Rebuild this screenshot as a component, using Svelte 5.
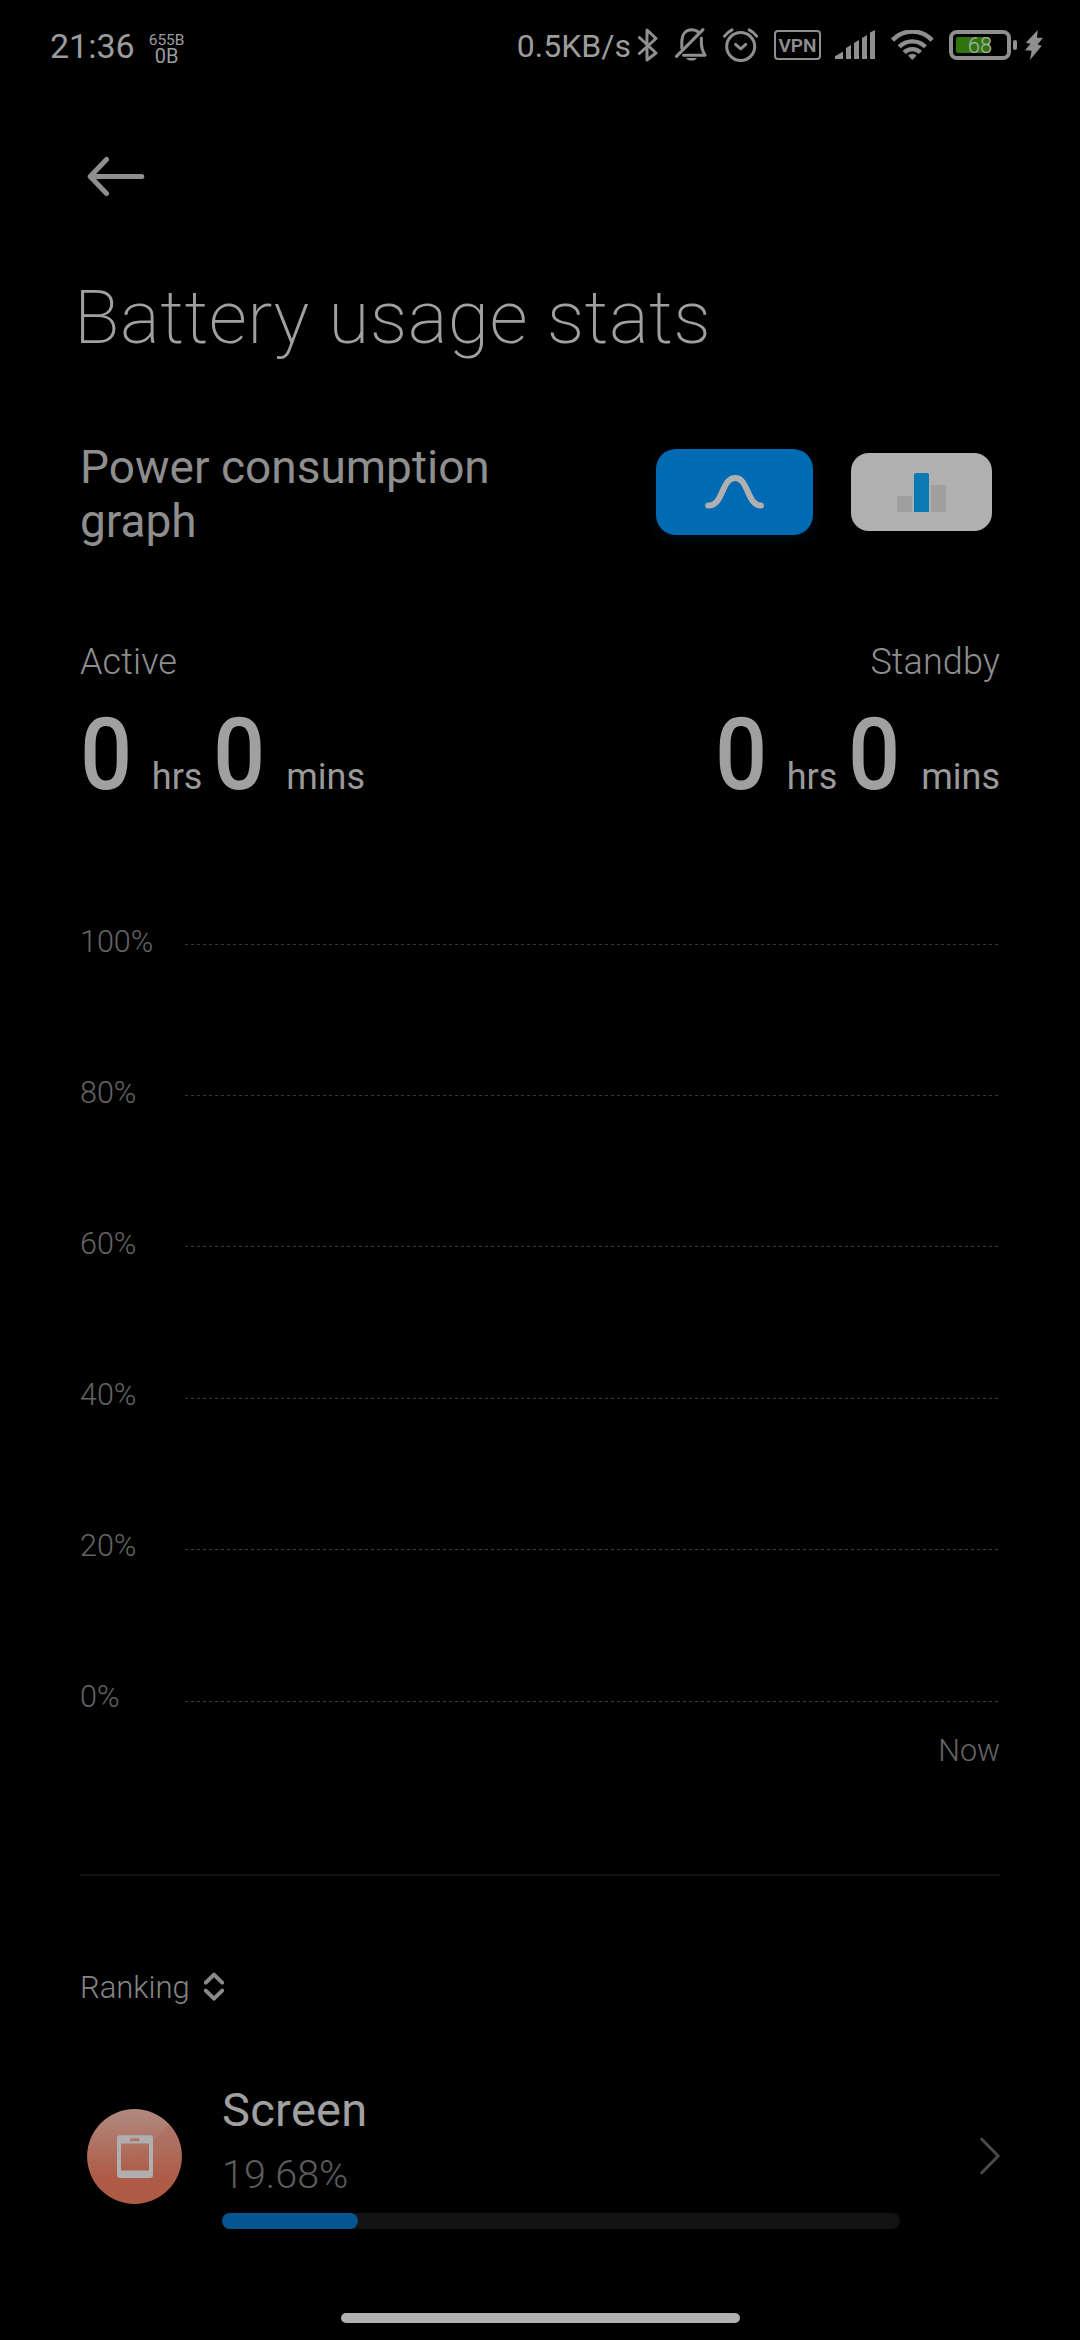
<svelte:options runes={true} />

<script>
	const usage = [
		{ label: 'Active', hours: 0, minutes: 0 },
		{ label: 'Standby', hours: 0, minutes: 0 }
	];

	const gridLevels = [100, 80, 60, 40, 20, 0];

	const ranking = [{ name: 'Screen', percent: 19.68 }];

	const signalBars = [
		'M0 26.3 L8 21.5 V29 H0z',
		'M11 18 L16 15 V29 H11z',
		'M19 13 L24 10 V29 H19z',
		'M27 8 L32 5 V29 H27z',
		'M35 2.4 L40 0 V29 H35z'
	];

	let mode = $state('curve');
</script>

<svelte:head>
	<title>Battery usage stats</title>
</svelte:head>

<div class="screen">
	<div class="status-bar">
		<span class="clock">21:36</span>
		<div class="traffic">
			<span class="traffic-up">655B</span>
			<span class="traffic-down">0B</span>
		</div>

		<div class="status-icons">
			<span class="speed">0.5KB/s</span>
			<svg class="bluetooth" width="20" height="34" viewBox="0 0 20 34">
				<path class="line" d="M1.4 9.5 L18 25 L9 32 V2 L18 10.5 L1.4 25.5" />
			</svg>
			<svg class="muted" width="32" height="34" viewBox="0 0 32 34">
				<path class="line" d="M6.8 20 V14 C6.8 6 11 1.8 16.5 1.8 C20 1.8 22.3 2.8 24 4.8" />
				<path class="line" d="M26.4 10 V16 C26.4 21 28 23.6 30 27.2 H8.5" />
				<path class="line" d="M1.5 28.4 L28 1.6" />
				<path class="solid" d="M11 30 H22 C20.5 33.4 12.5 33.4 11 30z" />
			</svg>
			<svg class="alarm" width="35" height="34" viewBox="0 0 35 34">
				<circle class="line" cx="17.7" cy="18.5" r="14" />
				<path class="line" d="M1.6 8.2 Q4.6 4 9 1.8 M26.2 1.8 Q30.6 4 33.6 8.2" />
				<path class="line" d="M12.6 16.4 L17.7 20.8 L22.8 16.4" />
			</svg>
			<span class="vpn">VPN</span>
			<svg class="signal" width="40" height="30" viewBox="0 0 40 30">
				{#each signalBars as d}
					<path class="solid" {d} />
				{/each}
			</svg>
			<svg class="wifi" width="43" height="30" viewBox="0 0 43 30">
				<path d="M1.5 10.2 A27 27 0 0 1 41.1 10.2" />
				<path d="M8.2 16.8 A18.5 18.5 0 0 1 34.4 16.8" />
				<path d="M13.2 22.6 A11.2 11.2 0 0 1 29.4 22.6" />
				<path class="solid" d="M17 25.6 Q21.3 22 25.6 25.6 L21.3 30z" />
			</svg>
			<div class="battery">
				<div class="battery-fill"></div>
				<span class="battery-level">68</span>
			</div>
			<div class="battery-tip"></div>
			<svg class="bolt" width="18" height="30" viewBox="0 0 18 30">
				<path class="solid" d="M12.8 0 L0.8 12.8 L5.6 13.8 L0 20.2 L6.6 20.8 L5 30 L16.8 15.8 L12.6 14.6 L18 7.8 L12 7.8z" />
			</svg>
		</div>
	</div>

	<header class="header">
		<button class="back" aria-label="Back">
			<svg width="58" height="40" viewBox="0 0 58 40">
				<path d="M54.8 20.4 H3.2 M19.5 3.4 L3.2 20.4 L19.5 37.4" />
			</svg>
		</button>
		<h1>Battery usage stats</h1>
	</header>

	<main>
		<section class="mode-row">
			<h2>Power consumption graph</h2>
			<div class="modes">
				<button class="mode" class:active={mode === 'curve'} aria-label="Curve" onclick={() => (mode = 'curve')}>
					<svg width="60" height="36" viewBox="0 0 60 36">
						<path class="curve" d="M3.2 31.6 C19 31.6 16 4 30.3 4 C43.5 4 42 31.6 56 31.6" />
					</svg>
				</button>
				<button class="mode" class:active={mode === 'bars'} aria-label="Bars" onclick={() => (mode = 'bars')}>
					<svg width="49" height="39" viewBox="0 0 49 39">
						<path class="bar-side" d="M0 39 V24.5 Q0 23 1.5 23 H13.5 Q15 23 15 24.5 V39z" />
						<path class="bar-mid" d="M17 39 V2 Q17 0 19 0 H30 Q32 0 32 2 V39z" />
						<path class="bar-side" d="M34 39 V14 Q34 12 36 12 H47 Q49 12 49 14 V39z" />
					</svg>
				</button>
			</div>
		</section>

		<section class="usage">
			{#each usage as item}
				<div class="usage-item">
					<span class="usage-label">{item.label}</span>
					<div class="usage-time">
						<b>{item.hours}</b><span class="hrs">hrs</span><b>{item.minutes}</b><span class="mins">mins</span>
					</div>
				</div>
			{/each}
		</section>

		<section class="chart">
			{#each gridLevels as level, i}
				<div class="grid-row">
					<span class="grid-label">{level}%</span>
					<!-- the plot is 2px taller than the label column -->
					<div class="grid-line" style="margin-top: {20 + Math.floor(i * 0.4)}px"></div>
				</div>
			{/each}
			<span class="now">Now</span>
		</section>

		<section class="ranking">
			<div class="ranking-title">
				<span>Ranking</span>
				<svg width="20" height="30" viewBox="0 0 20 30">
					<path d="M1.8 10.6 L10 2.6 L18.2 10.6 M1.8 18.6 L10 26.6 L18.2 18.6" />
				</svg>
			</div>

			{#each ranking as app}
				<div class="app">
					<svg class="app-icon" width="95" height="95" viewBox="0 0 95 95">
						<defs>
							<linearGradient id="coral" x1="0" y1="0" x2="0" y2="1">
								<stop offset="0" stop-color="#b08a80" />
								<stop offset="0.35" stop-color="#af7364" />
								<stop offset="0.7" stop-color="#ae5c47" />
								<stop offset="1" stop-color="#ad5b44" />
							</linearGradient>
							<linearGradient id="shade" x1="0" y1="0" x2="0" y2="1">
								<stop offset="0" stop-color="#a85a45" stop-opacity="0.3" />
								<stop offset="1" stop-color="#a85a45" stop-opacity="0" />
							</linearGradient>
							<clipPath id="disc"><circle cx="47.5" cy="47.5" r="47.4" /></clipPath>
						</defs>
						<circle cx="47.5" cy="47.5" r="47.4" fill="url(#coral)" />
						<path d="M84 14 L42 54 H95 V14z" fill="url(#shade)" clip-path="url(#disc)" />
						<path
							fill="#b0aeae"
							fill-rule="evenodd"
							d="M33 26.3 H63 Q66 26.3 66 29.3 V66 Q66 69 63 69 H33 Q30 69 30 66 V29.3 Q30 26.3 33 26.3z M34 34.5 V61.5 H62 V34.5z M44 29.2 Q42.8 29.2 42.8 30.7 Q42.8 32.2 44 32.2 H51.3 Q52.5 32.2 52.5 30.7 Q52.5 29.2 51.3 29.2z"
						/>
					</svg>
					<div class="app-body">
						<span class="app-name">{app.name}</span>
						<span class="app-percent">{app.percent}%</span>
						<div class="track">
							<div class="track-fill" style="width: {Math.round(app.percent)}%"></div>
						</div>
					</div>
					<svg class="chevron" width="20" height="38" viewBox="0 0 20 38">
						<path d="M1.8 2.2 L18.2 19 L1.8 35.8" />
					</svg>
				</div>
			{/each}
		</section>
	</main>

	<div class="home-indicator"></div>
</div>

<style>
	:global(body) {
		margin: 0;
		background: #000;
	}

	.screen {
		box-sizing: border-box;
		width: 1080px;
		height: 2340px;
		display: flex;
		flex-direction: column;
		overflow: hidden;
		background: #000;
		color: #8e8e8e;
		font-family: Roboto, sans-serif;
	}

	.screen svg {
		display: block;
		flex-shrink: 0;
		fill: none;
		stroke-linecap: round;
		stroke-linejoin: round;
	}

	button {
		padding: 0;
		border: none;
		background: none;
	}

	/* status bar */
	.status-bar {
		height: 90px;
		display: flex;
		align-items: center;
		padding: 0 37px 0 50px;
		color: #9c9c9c;
	}

	.clock {
		font-size: 34px;
		line-height: 40px;
		padding-top: 2px;
	}

	.traffic {
		display: flex;
		flex-direction: column;
		align-items: center;
		margin-left: 14px;
		padding-top: 7px;
	}

	.traffic-up {
		font-size: 15.5px;
		line-height: 15px;
	}

	.traffic-down {
		font-size: 20px;
		line-height: 16px;
	}

	.status-icons {
		display: flex;
		align-items: center;
		margin-left: auto;
	}

	.speed {
		font-size: 32px;
		line-height: 38px;
		padding-top: 1px;
		margin-right: 7px;
	}

	.status-icons .line {
		stroke: #8f8f8f;
		stroke-width: 3;
	}

	.status-icons .solid {
		fill: #8f8f8f;
		stroke: none;
	}

	.muted {
		margin-left: 17px;
	}

	.alarm {
		margin-left: 16px;
	}

	.vpn {
		box-sizing: border-box;
		width: 47px;
		height: 30px;
		margin-left: 16px;
		border: 2px solid #8f8f8f;
		border-radius: 4px;
		color: #8f8f8f;
		font-size: 19px;
		font-weight: 600;
		line-height: 27px;
		text-align: center;
	}

	.signal {
		margin-left: 14px;
	}

	.wifi {
		margin-left: 16px;
	}

	.wifi path:not(.solid) {
		stroke: #8f8f8f;
		stroke-width: 4.4;
		stroke-linecap: butt;
	}

	.battery {
		position: relative;
		box-sizing: border-box;
		width: 62px;
		height: 30px;
		margin-left: 15px;
		padding: 3px;
		border: 4px solid #8f8f8f;
		border-radius: 8px;
	}

	.battery-fill {
		width: 34px;
		height: 16px;
		border-radius: 2px;
		background: #2e760c;
	}

	.battery-level {
		position: absolute;
		inset: 0;
		color: #b0b0b0;
		font-size: 22px;
		font-weight: 300;
		line-height: 24px;
		text-align: center;
	}

	.battery-tip {
		width: 4px;
		height: 10px;
		margin-left: 2px;
		border-radius: 2px;
		background: #8f8f8f;
	}

	.bolt {
		margin-left: 8px;
	}

	/* header */
	.header {
		display: flex;
		flex-direction: column;
		align-items: flex-start;
		padding: 66px 0 0 74px;
	}

	.back {
		margin-left: 13px;
	}

	.back path {
		stroke: #8f8f8f;
		stroke-width: 5;
	}

	h1 {
		margin: 77px 0 0;
		color: #a0a0a0;
		font-size: 75px;
		font-weight: 200;
		line-height: 88px;
		letter-spacing: 0.4px;
	}

	main {
		display: flex;
		flex-direction: column;
		padding: 0 80px;
	}

	/* graph mode */
	.mode-row {
		display: flex;
		align-items: center;
		justify-content: space-between;
		margin-top: 79px;
	}

	h2 {
		width: 480px;
		margin: 0;
		font-size: 46px;
		font-weight: 400;
		line-height: 54px;
	}

	.modes {
		display: flex;
		align-items: center;
		gap: 38px;
		margin-right: 8px;
		padding-bottom: 4px;
	}

	.mode {
		width: 141px;
		height: 78px;
		display: flex;
		align-items: center;
		justify-content: center;
		border-radius: 18px;
		background: #b0b0b0;
	}

	.mode.active {
		width: 157px;
		height: 86px;
		border-radius: 20px;
		background: #006ab2;
		box-shadow: 0 4px 12px rgba(0, 106, 178, 0.12);
	}

	.curve {
		stroke: #b0b0b0;
		stroke-width: 6;
	}

	.bar-side {
		fill: #9f9f9f;
	}

	.bar-mid {
		fill: #0a7ab5;
	}

	/* active / standby */
	.usage {
		display: flex;
		justify-content: space-between;
		margin-top: 93px;
	}

	.usage-item {
		display: flex;
		flex-direction: column;
	}

	.usage-item:last-child {
		align-items: flex-end;
	}

	.usage-label {
		font-size: 36px;
		font-weight: 300;
		line-height: 42px;
		letter-spacing: 0.1px;
	}

	.usage-time {
		display: flex;
		align-items: baseline;
		margin-top: 13px;
		font-size: 36px;
		line-height: 42px;
		color: #9a9a9a;
	}

	.usage-time b {
		color: #a0a0a0;
		font-size: 100px;
		font-weight: 500;
		line-height: 118px;
		transform: scaleX(0.92);
		transform-origin: left;
	}

	.hrs {
		margin: 0 11px 0 15px;
	}

	.mins {
		margin-left: 16px;
	}

	/* chart */
	.chart {
		display: flex;
		flex-direction: column;
		margin-top: 110px;
		padding-bottom: 105px;
		border-bottom: 2px solid #121212;
		color: #646464;
		font-size: 30.5px;
		font-weight: 300;
	}

	.grid-row {
		display: flex;
		align-items: flex-start;
		height: 36px;
		margin-bottom: 115px;
	}

	.grid-row:nth-last-child(2) {
		margin-bottom: 0;
	}

	.grid-label {
		width: 105px;
		line-height: 36px;
	}

	.grid-line {
		width: 813px;
		height: 1px;
		background: repeating-linear-gradient(to right, #3a3a3a 0 3px, transparent 3px 6px);
	}

	.now {
		align-self: flex-end;
		margin-top: 18px;
		line-height: 36px;
	}

	/* ranking */
	.ranking-title {
		display: flex;
		align-items: center;
		gap: 14px;
		height: 36px;
		margin-top: 93px;
		color: #858585;
		font-size: 31px;
		font-weight: 300;
	}

	.ranking-title path {
		stroke: #8a8a8a;
		stroke-width: 4;
	}

	.app {
		display: flex;
		align-items: center;
		margin-top: 78px;
	}

	.app-icon {
		margin-left: 7px;
	}

	.app-body {
		width: 678px;
		display: flex;
		flex-direction: column;
		margin-left: 40px;
	}

	.app-name {
		color: #a0a0a0;
		font-size: 47px;
		line-height: 54px;
		letter-spacing: 0.3px;
	}

	.app-percent {
		margin-top: 15px;
		color: #5c5c5c;
		font-size: 39.5px;
		font-weight: 300;
		line-height: 46px;
	}

	.track {
		height: 16px;
		margin-top: 15px;
		border-radius: 8px;
		background: #131313;
	}

	.track-fill {
		height: 16px;
		border-radius: 8px;
		background: #03568f;
	}

	.chevron {
		margin-left: auto;
	}

	.chevron path {
		stroke: #4a4a4a;
		stroke-width: 3;
	}

	.home-indicator {
		width: 399px;
		height: 10px;
		margin: auto auto 17px;
		border-radius: 5px;
		background: #b0b0b0;
	}
</style>
